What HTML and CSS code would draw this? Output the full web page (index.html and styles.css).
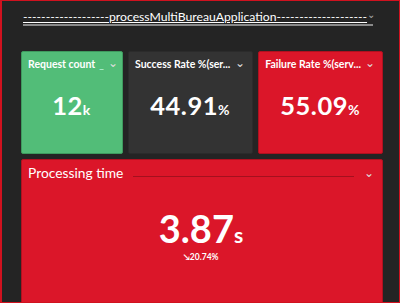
FILE: index.html
```html
<!DOCTYPE html>
<html lang="en">
  <head>
    <meta charset="UTF-8" />
    <title>processMultiBureauApplication</title>
    <link rel="stylesheet" href="styles.css">
  </head>
  <body>
    <div class="frame">
      <header class="section-head">
        <span class="section-title">-------------------processMultiBureauApplication--------------------</span>
        <span class="chev small">&#8964;</span>
      </header>

      <div class="tiles">
        <div class="tile green">
          <div class="tile-head">
            <span class="tile-title">Request count</span>
            <span class="dash">_</span>
            <span class="chev">&#8964;</span>
          </div>
          <div class="tile-value">12<span class="unit">k</span></div>
        </div>
        <div class="tile dark">
          <div class="tile-head">
            <span class="tile-title">Success Rate %(ser...</span>
            <span class="chev">&#8964;</span>
          </div>
          <div class="tile-value">44.91<span class="unit">%</span></div>
        </div>
        <div class="tile red">
          <div class="tile-head">
            <span class="tile-title">Failure Rate %(serv...</span>
            <span class="chev">&#8964;</span>
          </div>
          <div class="tile-value">55.09<span class="unit">%</span></div>
        </div>
      </div>

      <div class="tile red big">
        <div class="tile-head">
          <span class="big-title">Processing time</span>
          <span class="rule"></span>
          <span class="chev">&#8964;</span>
        </div>
        <div class="big-value">3.87<span class="unit">s</span></div>
        <div class="delta">&#8600;20.74%</div>
      </div>
    </div>
  </body>
</html>
```

FILE: styles.css
```css
body {
  margin: 0;
  background: #242424;
  font-family: "Lato", "Open Sans", sans-serif;
  color: #fff;
}

.frame {
  box-sizing: border-box;
  width: 400px;
  height: 303px;
  overflow: hidden;
  background: #242424;
  border: 1px solid #d0121f;
  border-left-width: 2px;
  padding: 0 16px 0 19px;
}

.section-head {
  position: relative;
  margin: 9px 10px 0 2px;
  border-bottom: 2px solid #8a8a8a;
  height: 14px;
}

.section-title {
  display: block;
  font-size: 12.2px;
  line-height: 14px;
  text-decoration: underline;
  white-space: nowrap;
}

.section-head .chev {
  position: absolute;
  right: -2px;
  top: -1px;
}

.chev {
  font-size: 12px;
  line-height: 10px;
  color: #ddd;
}

.chev.small {
  font-size: 10px;
  color: #aaa;
}

.tiles {
  display: flex;
  gap: 5px;
  margin-top: 25px;
}

.tile {
  box-sizing: border-box;
  height: 103px;
  border: 1px solid rgba(0, 0, 0, 0.35);
  border-radius: 2px;
  padding: 6px 7px 0 6px;
}

.tiles .tile:nth-child(1) { width: 102px; }
.tiles .tile:nth-child(2) { width: 126px; }
.tiles .tile:nth-child(3) { width: 125px; }

.green { background: #52bd78; border-color: #3e9a5e; }
.dark { background: #333333; border-color: #2b2b2b; }
.red { background: #db1629; border-color: #b0101f; }

.tile-head {
  display: flex;
  align-items: flex-start;
  gap: 4px;
}

.tile-title {
  font-size: 10.5px;
  font-weight: 700;
  white-space: nowrap;
}

.dash {
  margin-left: auto;
  font-size: 10px;
  color: #cfe;
}

.tile-title + .chev {
  margin-left: auto;
}

.tile-value {
  margin-top: 20px;
  text-align: center;
  font-size: 25.5px;
  font-weight: 700;
  letter-spacing: 0.5px;
}

.tile-value .unit {
  font-size: 14px;
}

.big {
  width: 362px;
  height: 160px;
  margin-top: 5px;
  padding: 4px 8px 0 6px;
}

.big .tile-head {
  align-items: center;
}

.big-title {
  font-size: 13.8px;
  white-space: nowrap;
}

.rule {
  flex: 1;
  height: 1px;
  margin: 8px 6px 0 6px;
  background: rgba(0, 0, 0, 0.25);
}

.big-value {
  margin-top: 27px;
  text-align: center;
  font-size: 38px;
  line-height: 40px;
  font-weight: 700;
}

.big-value .unit {
  font-size: 21px;
}

.delta {
  text-align: center;
  font-size: 8.5px;
  font-weight: 700;
  margin-top: -3px;
}
```
